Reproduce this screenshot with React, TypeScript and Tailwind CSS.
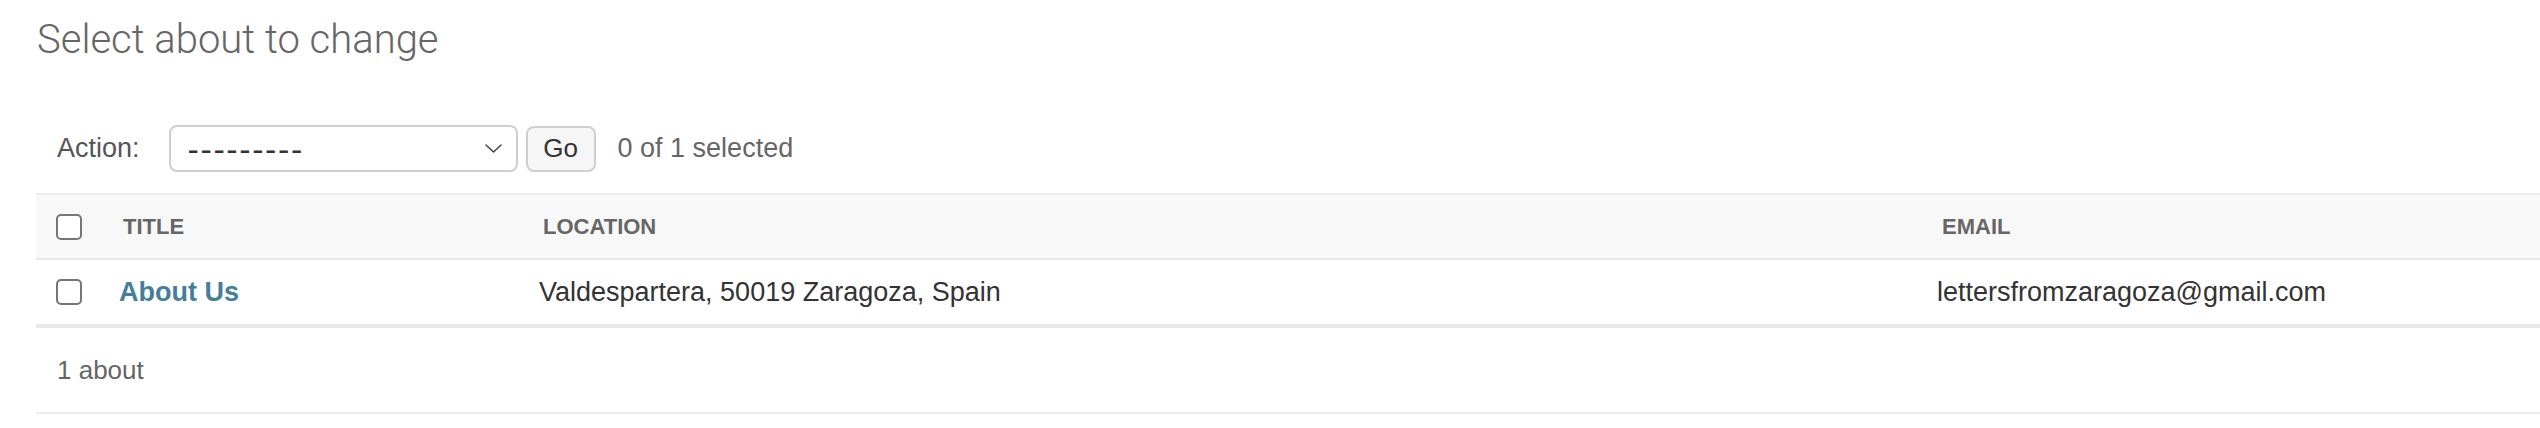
import React from 'react';

const rows = [
  {
    title: 'About Us',
    location: 'Valdespartera, 50019 Zaragoza, Spain',
    email: 'lettersfromzaragoza@gmail.com',
  },
];

function Checkbox() {
  return <div className="h-[26px] w-[26px] rounded-[5px] border-2 border-[#767676] bg-white" />;
}

export default function App() {
  return (
    <div className="min-h-screen bg-white pl-[36px] font-['Liberation_Sans',Arial,sans-serif] text-[#333]">
      <h1 className="mt-[16px] pl-px font-['Roboto',sans-serif] text-[40px] font-light leading-[48px] text-[#666]">
        Select about to change
      </h1>

      {/* actions */}
      <div className="mt-[61px] flex h-[47px] items-center pl-[21px]">
        <span className="text-[27px] text-[#555]">Action:</span>
        <div className="ml-[29px] flex h-[47px] w-[349px] items-center justify-between rounded-[8px] border-2 border-[#cfcfcf] bg-white pl-[17px] pr-[8px]">
          <span className="text-[34px] leading-none tracking-[1.6px] text-[#333]">---------</span>
          <svg width="17" height="9" viewBox="0 0 17 9" fill="none" className="mr-[6px]">
            <polyline points="1,1 8.5,8 16,1" stroke="#444" strokeWidth="1.5" strokeLinejoin="round" strokeLinecap="round" />
          </svg>
        </div>
        <button className="ml-[8px] flex h-[46px] w-[70px] items-center justify-center rounded-[8px] border-2 border-[#cfcfcf] bg-[#f6f6f6] text-[26px] text-[#333]">
          Go
        </button>
        <span className="ml-[22px] text-[27px] text-[#666]">0 of 1 selected</span>
      </div>

      {/* results table */}
      <div className="mt-[21px] border-t-2 border-[#ececec]">
        <div className="grid h-[65px] grid-cols-[63px_420px_1398px_1fr] items-center border-b-2 border-[#e8e8e8] bg-[#f8f8f8] text-[22px] font-bold uppercase text-[#666]">
          <div className="pl-[20px]">
            <Checkbox />
          </div>
          <div className="pl-[24px]">Title</div>
          <div className="pl-[24px]">Location</div>
          <div className="pl-[25px]">Email</div>
        </div>
        {rows.map((r) => (
          <div
            key={r.email}
            className="grid h-[68px] grid-cols-[63px_420px_1398px_1fr] items-center border-b-4 border-[#e8e8e8] text-[27px]"
          >
            <div className="pl-[20px]">
              <Checkbox />
            </div>
            <div className="pl-[20px]">
              <a href="#" className="font-bold text-[#447e9b]">
                {r.title}
              </a>
            </div>
            <div className="pl-[20px]">{r.location}</div>
            <div className="pl-[20px]">{r.email}</div>
          </div>
        ))}
      </div>

      {/* paginator */}
      <div className="flex h-[86px] items-center border-b-2 border-[#ececec] pl-[21px] text-[26px] text-[#666]">
        1 about
      </div>
    </div>
  );
}
